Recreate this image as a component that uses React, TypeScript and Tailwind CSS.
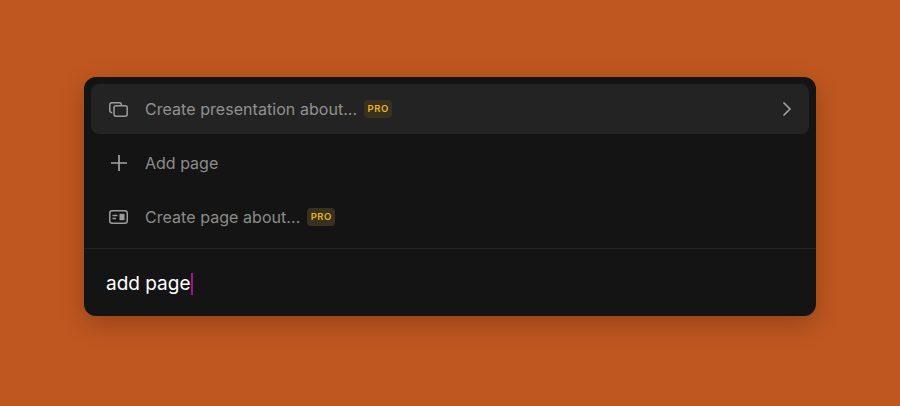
function SlidesIcon() {
  return (
    <svg width="19" height="15" viewBox="0 0 19 15" fill="none" stroke="currentColor" strokeWidth="1.5" strokeLinejoin="round">
      <path d="M3.2 10.6H2.800a2 2 0 0 1-2-2V2.800a2 2 0 0 1 2-2h7.600a2 2 0 0 1 2 2v.8" />
      <rect x="5" y="3.800" width="13.200" height="10.400" rx="2" />
    </svg>
  );
}

function PlusIcon() {
  return (
    <svg width="16" height="16" viewBox="0 0 16 16" fill="none" stroke="currentColor" strokeWidth="1.700">
      <path d="M8 0v16M0 8h16" />
    </svg>
  );
}

function CardIcon() {
  return (
    <svg width="19" height="14" viewBox="0 0 19 14" fill="none">
      <rect x="0.75" y="0.75" width="17.500" height="12.500" rx="2.500" stroke="currentColor" strokeWidth="1.500" />
      <path d="M3.500 5.500h5M3.500 8.500h3.500" stroke="currentColor" strokeWidth="1.500" />
      <rect x="10.500" y="3.800" width="5" height="6.400" fill="currentColor" />
    </svg>
  );
}

function ChevronIcon() {
  return (
    <svg width="10" height="16" viewBox="0 0 10 16" fill="none" stroke="currentColor" strokeWidth="1.600">
      <path d="M1.500 1.500 8 8l-6.500 6.500" />
    </svg>
  );
}

function ProBadge() {
  return (
    <span className="flex h-[18px] w-[28px] items-center justify-center rounded-[4px] bg-[#393120] text-[9.5px] font-semibold tracking-[0.06em] text-[#eab716]">
      PRO
    </span>
  );
}

export default function App() {
  return (
    <div className="h-[406px] w-full bg-[#bf5720] pt-[77px] font-['Inter',sans-serif]">
      <div className="mx-auto w-[732px] rounded-xl bg-[#141414] shadow-[0_8px_24px_rgba(0,0,0,0.22)]">
        <div className="p-[7px] pb-0">
          {/* active row */}
          <div className="flex h-[50px] items-center rounded-lg bg-[#232323] pl-[18px] pr-[17px] text-[#919191]">
            <span className="flex w-[36px] shrink-0 items-center text-[#9c9c9c]">
              <SlidesIcon />
            </span>
            <span className="text-base tracking-[0.05px]">Create presentation about...</span>
            <span className="ml-[7px]">
              <ProBadge />
            </span>
            <span className="ml-auto text-[#a3a3a3]">
              <ChevronIcon />
            </span>
          </div>
          <div className="flex h-[58px] items-center pl-[18px] text-[#8c8c8c]">
            <span className="flex w-[36px] shrink-0 items-center pl-[2px] text-[#a3a3a3]">
              <PlusIcon />
            </span>
            <span className="text-base">Add page</span>
          </div>
          <div className="flex h-[50px] items-center pl-[18px] text-[#8c8c8c]">
            <span className="flex w-[36px] shrink-0 items-center text-[#9c9c9c]">
              <CardIcon />
            </span>
            <span className="text-base tracking-[0.05px]">Create page about...</span>
            <span className="ml-[7px]">
              <ProBadge />
            </span>
          </div>
        </div>
        <div className="mt-[6px] flex h-[68px] items-center border-t border-[#242424] pt-[3px] pl-[22px]">
          <span className="text-[19px] text-white">add page</span>
          <span className="h-[22px] w-[2px] bg-[#a010a0]" />
        </div>
      </div>
    </div>
  );
}
